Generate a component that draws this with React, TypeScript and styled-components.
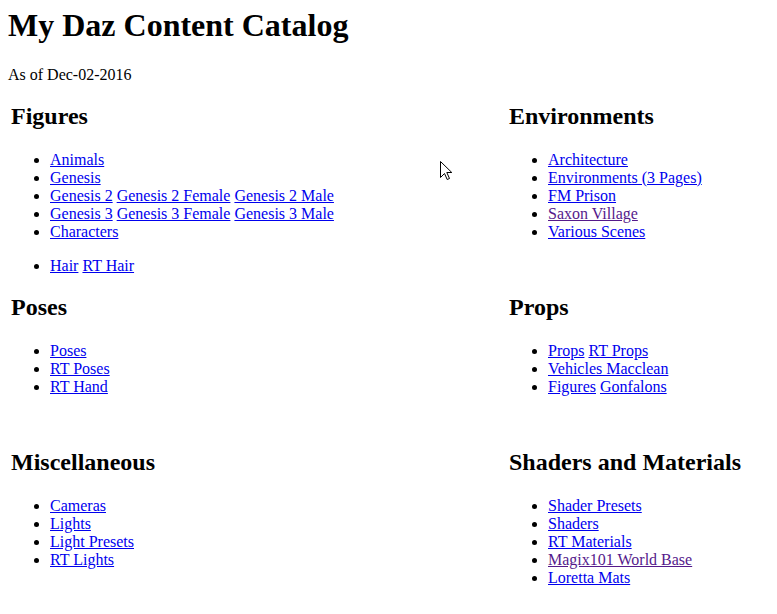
import React from "react";
import styled, { createGlobalStyle } from "styled-components";

const Global = createGlobalStyle`
  html, body { margin: 0; padding: 0; background: #ffffff; }
  body { font-family: "Liberation Serif", "Times New Roman", serif; color: #000; }
`;

const Page = styled.div`
  position: relative;
  padding: 7px 8px 8px 8px;
`;

const Title = styled.h1`
  margin: 0;
  font-size: 32px;
  line-height: 37px;
  font-weight: bold;
`;

const Dated = styled.p`
  margin: 22px 0 0 0;
  font-size: 16px;
  line-height: 18px;
`;

const Catalog = styled.div`
  display: grid;
  grid-template-columns: 498px 1fr;
  row-gap: 18px;
  margin-top: 17.5px;
  padding-left: 3px;
  align-items: start;
`;

const Section = styled.section<{ $extra?: number }>`
  margin-bottom: ${(p) => p.$extra ?? 0}px;
`;

const Heading = styled.h2`
  margin: 0 0 21px 0;
  font-size: 24px;
  line-height: 28px;
  font-weight: bold;
`;

const List = styled.ul<{ $gap?: boolean }>`
  margin: ${(p) => (p.$gap ? "16px" : "0")} 0 0 0;
  padding-left: 39px;
  list-style: disc;
`;

const Item = styled.li`
  font-size: 16px;
  line-height: 18px;
`;

const Link = styled.a<{ $visited?: boolean }>`
  color: ${(p) => (p.$visited ? "#551a8b" : "#0000ee")};
  text-decoration: underline;
  cursor: pointer;
`;

const Pointer = styled.svg`
  position: absolute;
  left: 440px;
  top: 161px;
  pointer-events: none;
`;

type L = { t: string; v?: boolean };
type Group = L[][];

const Links: React.FC<{ row: L[] }> = ({ row }) => (
  <Item>
    {row.map((l, i) => (
      <React.Fragment key={i}>
        {i > 0 && " "}
        <Link href="#" $visited={l.v}>
          {l.t}
        </Link>
      </React.Fragment>
    ))}
  </Item>
);

const Block: React.FC<{ title: string; lists: Group[]; extra?: number }> = ({
  title,
  lists,
  extra,
}) => (
  <Section $extra={extra}>
    <Heading>{title}</Heading>
    {lists.map((g, gi) => (
      <List key={gi} $gap={gi > 0}>
        {g.map((row, ri) => (
          <Links key={ri} row={row} />
        ))}
      </List>
    ))}
  </Section>
);

const s = (...t: string[]): L[] => t.map((x) => ({ t: x }));

export default function App() {
  return (
    <Page>
      <Global />
      <Title>My Daz Content Catalog</Title>
      <Dated>As of Dec-02-2016</Dated>
      <Catalog>
        <Block
          title="Figures"
          lists={[
            [
              s("Animals"),
              s("Genesis"),
              s("Genesis 2", "Genesis 2 Female", "Genesis 2 Male"),
              s("Genesis 3", "Genesis 3 Female", "Genesis 3 Male"),
              s("Characters"),
            ],
            [s("Hair", "RT Hair")],
          ]}
        />
        <Block
          title="Environments"
          lists={[
            [
              s("Architecture"),
              s("Environments (3 Pages)"),
              s("FM Prison"),
              [{ t: "Saxon Village", v: true }],
              s("Various Scenes"),
            ],
          ]}
        />
        <Block
          title="Poses"
          extra={34}
          lists={[[s("Poses"), s("RT Poses"), s("RT Hand")]]}
        />
        <Block
          title="Props"
          extra={34}
          lists={[
            [s("Props", "RT Props"), s("Vehicles Macclean"), s("Figures", "Gonfalons")],
          ]}
        />
        <Block
          title="Miscellaneous"
          lists={[[s("Cameras"), s("Lights"), s("Light Presets"), s("RT Lights")]]}
        />
        <Block
          title="Shaders and Materials"
          lists={[
            [
              s("Shader Presets"),
              s("Shaders"),
              s("RT Materials"),
              [{ t: "Magix101 World Base", v: true }],
              s("Loretta Mats"),
            ],
          ]}
        />
      </Catalog>
      <Pointer width="13" height="20" viewBox="0 0 13 20">
        <path
          d="M0.5 0.5 L0.5 16.5 L4.5 12.5 L7.2 18.5 L9.5 17.5 L6.8 11.5 L11.8 11.5 Z"
          fill="#ffffff"
          stroke="#000000"
          strokeWidth="1"
          strokeLinejoin="miter"
        />
      </Pointer>
    </Page>
  );
}
